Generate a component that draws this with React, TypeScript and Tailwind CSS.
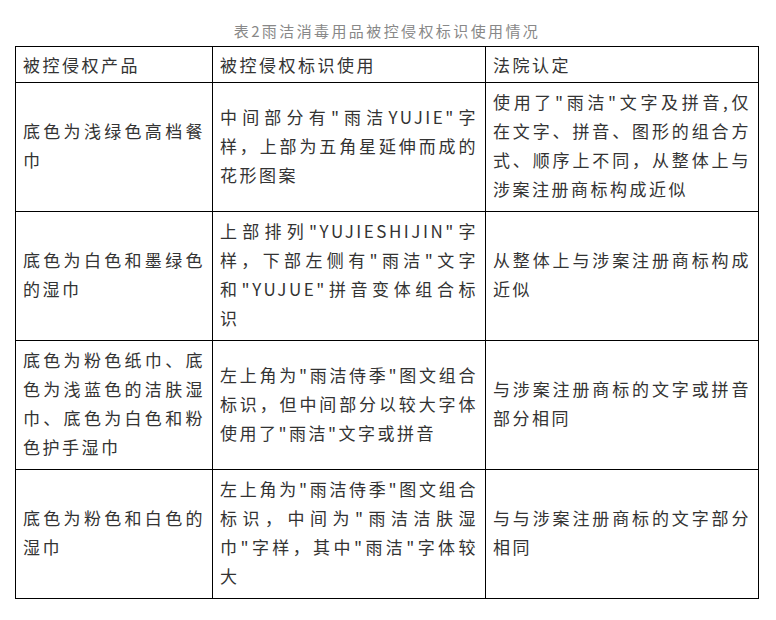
const rows: string[][][] = [
  [
    ['底色为浅绿色高档餐', '巾'],
    ['中间部分有"雨洁YUJIE"字', '样，上部为五角星延伸而成的', '花形图案'],
    ['使用了"雨洁"文字及拼音,仅', '在文字、拼音、图形的组合方', '式、顺序上不同，从整体上与', '涉案注册商标构成近似'],
  ],
  [
    ['底色为白色和墨绿色', '的湿巾'],
    ['上部排列"YUJIESHIJIN"字', '样，下部左侧有"雨洁"文字', '和"YUJUE"拼音变体组合标', '识'],
    ['从整体上与涉案注册商标构成', '近似'],
  ],
  [
    ['底色为粉色纸巾、底', '色为浅蓝色的洁肤湿', '巾、底色为白色和粉', '色护手湿巾'],
    ['左上角为"雨洁侍季"图文组合', '标识，但中间部分以较大字体', '使用了"雨洁"文字或拼音'],
    ['与涉案注册商标的文字或拼音', '部分相同'],
  ],
  [
    ['底色为粉色和白色的', '湿巾'],
    ['左上角为"雨洁侍季"图文组合', '标识，中间为"雨洁洁肤湿', '巾"字样，其中"雨洁"字体较', '大'],
    ['与与涉案注册商标的文字部分', '相同'],
  ],
];

const headers = ['被控侵权产品', '被控侵权标识使用', '法院认定'];

function CellLines({ lines }: { lines: string[] }) {
  return (
    <>
      {lines.map((line, i) => (
        <div
          key={i}
          className={
            i < lines.length - 1
              ? 'text-justify [text-align-last:justify]'
              : 'text-left'
          }
        >
          {line}
        </div>
      ))}
    </>
  );
}

export default function App() {
  return (
    <div
      className="w-[776px] h-[620px] bg-white text-[#333] pl-[15px]"
      style={{ fontFamily: '"Noto Sans CJK SC", sans-serif' }}
    >
      <div className="w-[744px]">
        {/* Caption */}
        <div className="pt-[20px] pb-[4px] text-center text-[15px] leading-[22px] tracking-[2.4px] text-[#888]">
          表2雨洁消毒用品被控侵权标识使用情况
        </div>

        <table className="w-[744px] table-fixed border-collapse text-[17px] leading-[29px] tracking-[2.5px]">
          <colgroup>
            <col className="w-[197px]" />
            <col className="w-[273px]" />
            <col className="w-[273px]" />
          </colgroup>
          <thead>
            <tr>
              {headers.map((h) => (
                <th
                  key={h}
                  className="border border-black px-[7px] pt-[3px] pb-[3px] text-left font-normal align-middle"
                >
                  {h}
                </th>
              ))}
            </tr>
          </thead>
          <tbody>
            {rows.map((row, r) => (
              <tr key={r}>
                {row.map((cell, c) => (
                  <td
                    key={c}
                    className="border border-black px-[7px] pt-[4px] pb-[8px] align-middle"
                  >
                    <CellLines lines={cell} />
                  </td>
                ))}
              </tr>
            ))}
          </tbody>
        </table>
      </div>
    </div>
  );
}
